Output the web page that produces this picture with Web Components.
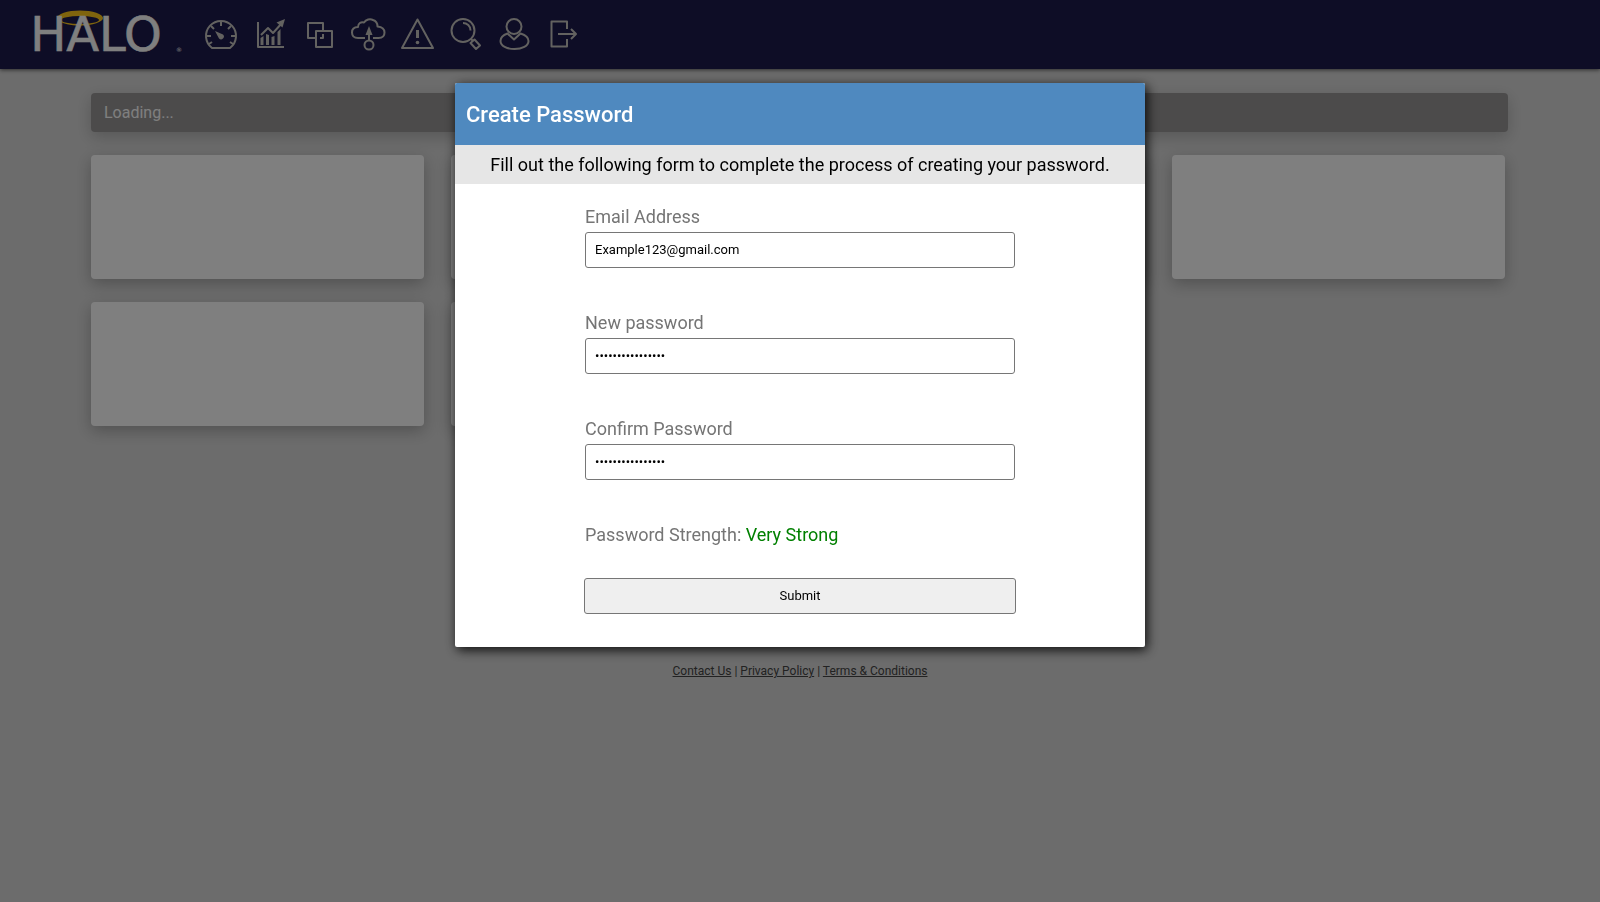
<!DOCTYPE html>
<html lang="en">
<head>
  <meta charset="UTF-8">
  <meta name="viewport" content="width=device-width, initial-scale=1.0">
  <title>HALO - Create Password</title>
  <style>
    :root {
      --navy: #1c1a4c;
      --blue: #4f89bf;
      --icon: #c6c4c0;
      --page: #d9d9d9;
    }

    body {
      margin: 0;
      min-height: 100vh;
      background: var(--page);
      font-family: Roboto, "Liberation Sans", sans-serif;
      font-size: 16px;
    }
  </style>
</head>
<body>
  <halo-header></halo-header>

  <halo-dashboard>
    <status-bar>Loading...</status-bar>
    <card-grid>
      <dash-card></dash-card>
      <dash-card></dash-card>
      <dash-card></dash-card>
      <dash-card></dash-card>
      <dash-card></dash-card>
      <dash-card></dash-card>
    </card-grid>
  </halo-dashboard>

  <halo-footer></halo-footer>

  <modal-dialog>
    <span slot="title">Create Password</span>
    <span slot="intro">Fill out the following form to complete the process of creating your password.</span>
    <password-form></password-form>
  </modal-dialog>

  <script>
    const ICONS = {
      gauge: `
        <path d="M9 31A15 15 0 1 1 27 31Z"/>
        <path d="M18 5v4M4 19h4M28 19h4M8 9l3 3M28 9l-3 3M6 27l3-2M30 27l-3-2"/>
        <path class="fill" d="M12 14l8 3.500a2.500 2.500 0 1 1-4 4z"/>`,
      chart: `
        <path d="M6 5v25h26"/>
        <path d="M9 18l7-7 5 5 9-10"/>
        <path class="fill" d="M33 2l-2.500 8.500-6-5z"/>
        <path class="fill" d="M8.500 21l3-2v9h-3zM14 17l3 1v10h-3zM19.500 20l3-1v9h-3zM25.500 15l3-3v16h-3z"/>`,
      layers: `
        <path d="M15 21H7V6h15v8"/>
        <path d="M15 14h16v16H15z"/>
        <path d="M22 17v4h-3"/>`,
      cloud: `
        <path d="M15 21H8C4 21 2 18.500 2 15.500C2 12 4.500 10 8 10C8 6.500 11 4.500 14 5.500C16 2.500 20 1.500 23 3C26 4 27.500 7 27.500 9.500C32 10 34.500 12 34.500 15.500C34.500 19 32 21 28.500 21H23"/>
        <path d="M19 23v-8"/>
        <path class="fill" d="M19 9l3.500 9h-7z"/>
        <circle cx="19" cy="28" r="4.500"/>`,
      warning: `
        <path d="M18.500 2.500L34 31H3z"/>
        <path class="thick" d="M18.500 13v8"/>
        <circle class="fill" cx="18.500" cy="25.500" r="1.800"/>`,
      search: `
        <circle cx="15" cy="13.500" r="11.500"/>
        <path d="M15 6c4 0 7.500 3 7.500 7.500"/>
        <path d="M23 22l2 2M22.500 26l4-3.500 5.500 6-4 3.500z"/>`,
      user: `
        <circle cx="17" cy="9.500" r="7.500"/>
        <path d="M10.500 16.500C6 18 3.500 21 3.500 24C3.500 29 10 32 17.500 32C25 32 31.500 29 31.500 24C31.500 21 28 18 23.500 16.500L17 22.500z"/>`,
      logout: `
        <path d="M21 12V4.500H5.500v25H21V22"/>
        <path d="M12 17h18M25 12l5 5-5 5"/>`
    };

    class HaloLogo extends HTMLElement {
      connectedCallback() {
        this.attachShadow({ mode: 'open' });
        this.shadowRoot.innerHTML = `
          <style>
            :host {
              display: block;
            }

            svg {
              display: block;
              width: 192px;
              height: 69px;
            }

            text {
              font-family: "DejaVu Sans", sans-serif;
              font-size: 48px;
              fill: #fff;
              stroke: #fff;
              stroke-width: 0.6;
            }

            .mark {
              font-size: 6px;
              stroke: none;
            }
          </style>
          <svg viewBox="0 0 192 69" role="img" aria-label="HALO">
            <path d="M57 18a23 7.500 0 0 1 46 0a23 7.500 0 0 1-46 0zM61 20a19 4 0 0 0 38 0a19 4 0 0 0-38 0z" fill="#ffc81a" fill-rule="evenodd"/>
            <text x="96" y="51" text-anchor="middle">HALO</text>
            <text class="mark" x="176" y="52">®</text>
          </svg>
        `;
      }
    }

    class NavIcon extends HTMLElement {
      connectedCallback() {
        const name = this.getAttribute('name');
        const label = this.getAttribute('label') || '';

        this.attachShadow({ mode: 'open' });
        this.shadowRoot.innerHTML = `
          <style>
            :host {
              display: block;
            }

            a {
              display: block;
              color: var(--icon);
            }

            a:hover {
              color: #fff;
            }

            svg {
              display: block;
              width: 36px;
              height: 36px;
              fill: none;
              stroke: currentColor;
              stroke-width: 2;
              stroke-linejoin: round;
            }

            .fill {
              fill: currentColor;
              stroke: none;
            }

            .thick {
              stroke-width: 3;
            }
          </style>
          <a href="#${name}" aria-label="${label}">
            <svg viewBox="0 0 36 36" aria-hidden="true">${ICONS[name]}</svg>
          </a>
        `;
      }
    }

    class HaloHeader extends HTMLElement {
      connectedCallback() {
        this.attachShadow({ mode: 'open' });
        this.shadowRoot.innerHTML = `
          <style>
            :host {
              display: block;
            }

            header {
              display: flex;
              align-items: center;
              gap: 11px;
              height: 69px;
              background: var(--navy);
              box-shadow: 0 1px 4px rgba(0, 0, 0, 0.6);
            }

            nav {
              display: flex;
              gap: 13px;
            }
          </style>
          <header>
            <halo-logo></halo-logo>
            <nav>
              <nav-icon name="gauge" label="Dashboard"></nav-icon>
              <nav-icon name="chart" label="Reports"></nav-icon>
              <nav-icon name="layers" label="Groups"></nav-icon>
              <nav-icon name="cloud" label="Upload"></nav-icon>
              <nav-icon name="warning" label="Alerts"></nav-icon>
              <nav-icon name="search" label="Search"></nav-icon>
              <nav-icon name="user" label="Account"></nav-icon>
              <nav-icon name="logout" label="Log out"></nav-icon>
            </nav>
          </header>
        `;
      }
    }

    class HaloDashboard extends HTMLElement {
      connectedCallback() {
        this.attachShadow({ mode: 'open' });
        this.shadowRoot.innerHTML = `
          <style>
            :host {
              display: block;
            }

            main {
              display: flex;
              flex-direction: column;
              gap: 23px;
              min-height: 546px;
              padding: 24px 92px 0 91px;
            }
          </style>
          <main><slot></slot></main>
        `;
      }
    }

    class StatusBar extends HTMLElement {
      connectedCallback() {
        this.attachShadow({ mode: 'open' });
        this.shadowRoot.innerHTML = `
          <style>
            :host {
              display: block;
              padding: 10px 13px;
              border-radius: 4px;
              background: #999797;
              box-shadow: 0 5px 16px rgba(0, 0, 0, 0.2);
              color: #fff;
              font-size: 16px;
              line-height: 19px;
            }
          </style>
          <slot></slot>
        `;
      }
    }

    class CardGrid extends HTMLElement {
      connectedCallback() {
        this.attachShadow({ mode: 'open' });
        this.shadowRoot.innerHTML = `
          <style>
            :host {
              display: grid;
              grid-template-columns: repeat(4, 1fr);
              gap: 23px 27px;
              padding-right: 3px;
            }
          </style>
          <slot></slot>
        `;
      }
    }

    class DashCard extends HTMLElement {
      connectedCallback() {
        this.attachShadow({ mode: 'open' });
        this.shadowRoot.innerHTML = `
          <style>
            :host {
              display: block;
              min-height: 124px;
              border-radius: 4px;
              background: #fff;
              box-shadow: 0 5px 16px rgba(0, 0, 0, 0.25);
            }
          </style>
          <slot></slot>
        `;
      }
    }

    class HaloFooter extends HTMLElement {
      connectedCallback() {
        this.attachShadow({ mode: 'open' });
        this.shadowRoot.innerHTML = `
          <style>
            :host {
              display: block;
            }

            footer {
              padding: 24px;
              color: #444;
              font-size: 12px;
              line-height: 16px;
              text-align: center;
            }

            a {
              color: inherit;
            }
          </style>
          <footer>
            <a href="#contact">Contact Us</a> |
            <a href="#privacy">Privacy Policy</a> |
            <a href="#terms">Terms &amp; Conditions</a>
          </footer>
        `;
      }
    }

    class ModalDialog extends HTMLElement {
      connectedCallback() {
        this.attachShadow({ mode: 'open' });
        this.shadowRoot.innerHTML = `
          <style>
            :host {
              position: fixed;
              inset: 0;
              display: block;
              overflow: auto;
              background: rgba(0, 0, 0, 0.5);
            }

            section {
              box-sizing: border-box;
              width: 90%;
              max-width: 690px;
              margin: 83px auto 24px;
              overflow: hidden;
              border-radius: 2px;
              background: #fff;
              box-shadow: 2px 3px 12px rgba(0, 0, 0, 0.9);
            }

            h1 {
              margin: 0;
              padding: 18px 11px 16px;
              background: var(--blue);
              color: #fff;
              font-size: 22px;
              font-weight: 500;
              line-height: 28px;
            }

            p {
              margin: 0;
              padding: 9px 12px;
              background: #e6e6e6;
              color: #000;
              font-size: 18px;
              line-height: 21px;
              text-align: center;
            }
          </style>
          <section role="dialog" aria-modal="true" aria-labelledby="title">
            <h1 id="title"><slot name="title"></slot></h1>
            <p><slot name="intro"></slot></p>
            <slot></slot>
          </section>
        `;
      }
    }

    class FormField extends HTMLElement {
      connectedCallback() {
        const label = this.getAttribute('label') || '';
        const type = this.getAttribute('type') || 'text';
        const value = this.getAttribute('value') || '';

        this.attachShadow({ mode: 'open' });
        this.shadowRoot.innerHTML = `
          <style>
            :host {
              display: flex;
              flex-direction: column;
              gap: 5px;
              padding: 0 1px;
            }

            label {
              color: #757575;
              font-size: 18px;
              line-height: 20px;
            }

            input {
              box-sizing: border-box;
              width: 100%;
              height: 36px;
              padding: 0 9px 2px;
              border: 1px solid #767676;
              border-radius: 3px;
              background: #fff;
              color: #000;
              font-family: inherit;
              font-size: 13px;
            }
          </style>
          <label for="field">${label}</label>
          <input id="field" type="${type}" value="${value}">
        `;
      }
    }

    class PasswordForm extends HTMLElement {
      connectedCallback() {
        this.attachShadow({ mode: 'open' });
        this.shadowRoot.innerHTML = `
          <style>
            :host {
              display: block;
            }

            form {
              display: flex;
              flex-direction: column;
              gap: 45px;
              max-width: 432px;
              margin: 0 auto;
              padding: 23px 12px 33px;
            }

            .actions {
              display: flex;
              flex-direction: column;
              gap: 33px;
            }

            .strength {
              padding: 0 1px;
              color: #757575;
              font-size: 18px;
              line-height: 20px;
            }

            output {
              color: #008000;
            }

            button {
              height: 36px;
              padding: 0 9px 2px;
              border: 1px solid #767676;
              border-radius: 3px;
              background: #efefef;
              color: #000;
              font-family: inherit;
              font-size: 13px;
              cursor: pointer;
            }
          </style>
          <form>
            <form-field label="Email Address" type="email" value="Example123@gmail.com"></form-field>
            <form-field label="New password" type="password" value="examplepassword1"></form-field>
            <form-field label="Confirm Password" type="password" value="examplepassword1"></form-field>
            <div class="actions">
              <div class="strength">Password Strength: <output>Very Strong</output></div>
              <button type="submit">Submit</button>
            </div>
          </form>
        `;
        this.shadowRoot.querySelector('form').addEventListener('submit', (e) => e.preventDefault());
      }
    }

    customElements.define('halo-logo', HaloLogo);
    customElements.define('nav-icon', NavIcon);
    customElements.define('halo-header', HaloHeader);
    customElements.define('halo-dashboard', HaloDashboard);
    customElements.define('status-bar', StatusBar);
    customElements.define('card-grid', CardGrid);
    customElements.define('dash-card', DashCard);
    customElements.define('halo-footer', HaloFooter);
    customElements.define('modal-dialog', ModalDialog);
    customElements.define('form-field', FormField);
    customElements.define('password-form', PasswordForm);
  </script>
</body>
</html>
